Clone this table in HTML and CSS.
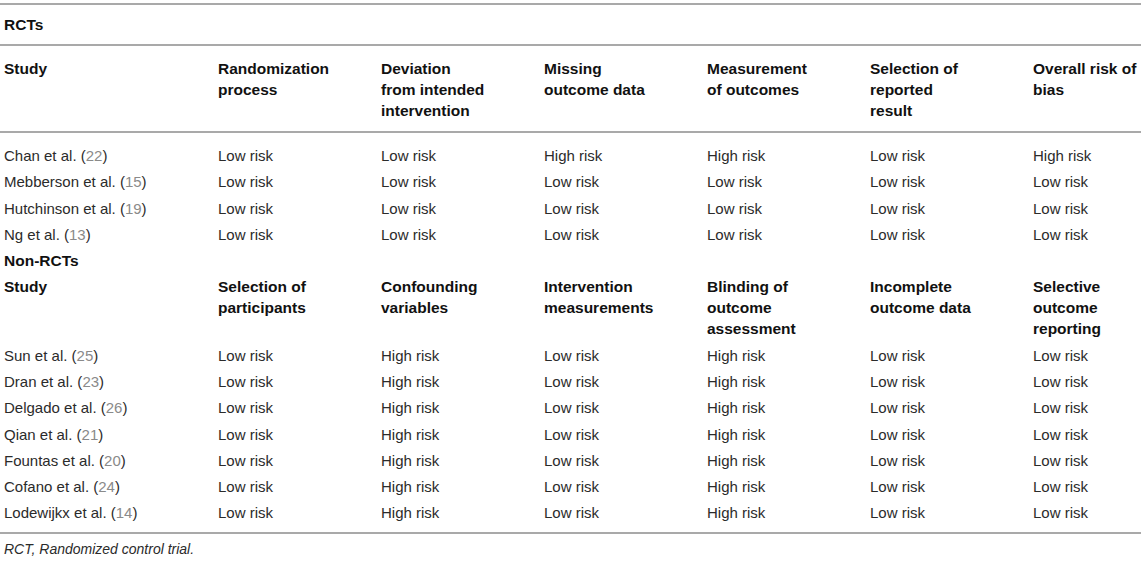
FILE: index.html
```html
<!DOCTYPE html>
<html lang="en">
<head>
    <meta charset="UTF-8">
    <link rel="stylesheet" href="styles.css">
</head>
<body>
    <table class="rob">
        <colgroup>
            <col class="c-study">
            <col class="c-dom"><col class="c-dom"><col class="c-dom">
            <col class="c-dom"><col class="c-dom"><col class="c-last">
        </colgroup>
        <thead>
            <tr class="group first">
                <th colspan="7">RCTs</th>
            </tr>
            <tr class="head">
                <th>Study</th>
                <th>Randomization process</th>
                <th>Deviation from intended intervention</th>
                <th>Missing outcome data</th>
                <th>Measurement of outcomes</th>
                <th>Selection of reported result</th>
                <th>Overall risk of bias</th>
            </tr>
        </thead>
        <tbody>
            <tr class="top"><td>Chan et al. (<span class="ref">22</span>)</td><td>Low risk</td><td>Low risk</td><td>High risk</td><td>High risk</td><td>Low risk</td><td>High risk</td></tr>
            <tr><td>Mebberson et al. (<span class="ref">15</span>)</td><td>Low risk</td><td>Low risk</td><td>Low risk</td><td>Low risk</td><td>Low risk</td><td>Low risk</td></tr>
            <tr><td>Hutchinson et al. (<span class="ref">19</span>)</td><td>Low risk</td><td>Low risk</td><td>Low risk</td><td>Low risk</td><td>Low risk</td><td>Low risk</td></tr>
            <tr><td>Ng et al. (<span class="ref">13</span>)</td><td>Low risk</td><td>Low risk</td><td>Low risk</td><td>Low risk</td><td>Low risk</td><td>Low risk</td></tr>
            <tr class="group"><th colspan="7">Non-RCTs</th></tr>
            <tr class="head2">
                <th>Study</th>
                <th>Selection of participants</th>
                <th>Confounding variables</th>
                <th>Intervention measurements</th>
                <th>Blinding of outcome assessment</th>
                <th>Incomplete outcome data</th>
                <th>Selective outcome reporting</th>
            </tr>
            <tr><td>Sun et al. (<span class="ref">25</span>)</td><td>Low risk</td><td>High risk</td><td>Low risk</td><td>High risk</td><td>Low risk</td><td>Low risk</td></tr>
            <tr><td>Dran et al. (<span class="ref">23</span>)</td><td>Low risk</td><td>High risk</td><td>Low risk</td><td>High risk</td><td>Low risk</td><td>Low risk</td></tr>
            <tr><td>Delgado et al. (<span class="ref">26</span>)</td><td>Low risk</td><td>High risk</td><td>Low risk</td><td>High risk</td><td>Low risk</td><td>Low risk</td></tr>
            <tr><td>Qian et al. (<span class="ref">21</span>)</td><td>Low risk</td><td>High risk</td><td>Low risk</td><td>High risk</td><td>Low risk</td><td>Low risk</td></tr>
            <tr><td>Fountas et al. (<span class="ref">20</span>)</td><td>Low risk</td><td>High risk</td><td>Low risk</td><td>High risk</td><td>Low risk</td><td>Low risk</td></tr>
            <tr><td>Cofano et al. (<span class="ref">24</span>)</td><td>Low risk</td><td>High risk</td><td>Low risk</td><td>High risk</td><td>Low risk</td><td>Low risk</td></tr>
            <tr class="last"><td>Lodewijkx et al. (<span class="ref">14</span>)</td><td>Low risk</td><td>High risk</td><td>Low risk</td><td>High risk</td><td>Low risk</td><td>Low risk</td></tr>
        </tbody>
    </table>
    <p class="note">RCT, Randomized control trial.</p>
</body>
</html>
```

FILE: styles.css
```css
* {
    margin: 0;
    padding: 0;
    box-sizing: border-box;
}

body {
    font-family: 'Liberation Sans', Arial, sans-serif;
    background-color: #ffffff;
    color: #2b2b2b;
    font-size: 15px;
    padding-top: 3px;
}

.rob {
    width: 1141px;
    border-collapse: collapse;
    table-layout: fixed;
    border-top: 2px solid #a9a9a9;
    border-bottom: 2px solid #a9a9a9;
}

.c-study { width: 214px; }
.c-dom { width: 163px; }
.c-last { width: 112px; }

.rob th,
.rob td {
    text-align: left;
    vertical-align: top;
    line-height: 21px;
    padding: 2.65px 52px 2.65px 4px;
    font-weight: normal;
}

.rob th:last-child,
.rob td:last-child {
    padding-right: 0;
}

.rob th {
    font-weight: bold;
    font-size: 15.5px;
    color: #111;
}

.rob .group.first th {
    padding: 9px 4px;
}

.rob thead .group {
    border-bottom: 2px solid #a9a9a9;
}

.rob .head th {
    padding-top: 12px;
    padding-bottom: 10px;
}

.rob thead .head {
    border-bottom: 2px solid #a9a9a9;
}

.rob .top td {
    padding-top: 12px;
}

.rob .last td {
    padding-bottom: 9px;
}

.ref {
    color: #8a8a8a;
}

.note {
    font-style: italic;
    font-size: 14px;
    line-height: 21px;
    color: #2b2b2b;
    padding: 5px 4px;
}
```
